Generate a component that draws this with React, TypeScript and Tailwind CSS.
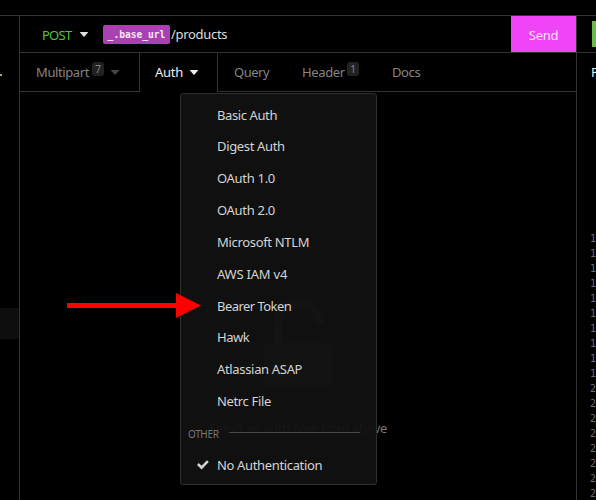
import React from 'react';

const authTypes = [
  { label: 'Basic Auth', height: 'h-[31px]', tracking: 'tracking-[-0.4px]' },
  { label: 'Digest Auth', height: 'h-8', tracking: 'tracking-[-0.34px]' },
  { label: 'OAuth 1.0', height: 'h-8', tracking: 'tracking-[-0.3px]' },
  { label: 'OAuth 2.0', height: 'h-8', tracking: 'tracking-[-0.3px]' },
  { label: 'Microsoft NTLM', height: 'h-8', tracking: 'tracking-[-0.32px]' },
  { label: 'AWS IAM v4', height: 'h-8', tracking: 'tracking-[-0.22px]' },
  { label: 'Bearer Token', height: 'h-[31px]', tracking: 'tracking-[-0.55px]' },
  { label: 'Hawk', height: 'h-8', tracking: 'tracking-[-0.45px]' },
  { label: 'Atlassian ASAP', height: 'h-8', tracking: 'tracking-[-0.33px]' },
  { label: 'Netrc File', height: 'h-8', tracking: 'tracking-[-0.35px]' },
];

const lineNumbers = [10, 11, 12, 13, 14, 15, 16, 17, 18, 19, 20, 21, 22, 23, 24, 25, 26, 27];

function Caret({ className }: { className: string }) {
  return (
    <svg viewBox="0 0 8 5" className={`h-[5px] w-2 shrink-0 ${className}`} fill="currentColor">
      <path d="M.4 0h7.2c.4 0 .5.4.2.7L4.5 4.6c-.3.4-.7.4-1 0L.2.7C-.1.4 0 0 .4 0Z" />
    </svg>
  );
}

function Badge({ children }: { children: React.ReactNode }) {
  return (
    <span className="mb-[6px] flex h-[14px] w-3 shrink-0 items-center justify-center rounded-[3px] bg-[#222] text-[10px] leading-none text-[#858585]">
      {children}
    </span>
  );
}

function AuthMenu() {
  return (
    <div className="absolute top-[93px] left-[180px] flex h-[392px] w-[197px] flex-col rounded-[3px] border border-[#2e2e2e] bg-[#111111]/95 pt-[5px] text-[#d4d4d4]">
      <ul>
        {authTypes.map((item) => (
          <li key={item.label} className={`flex items-start pt-[7px] pl-9 whitespace-nowrap ${item.height}`}>
            <span className={item.tracking}>{item.label}</span>
          </li>
        ))}
      </ul>
      <div className="flex h-[31px] items-center pr-4 pl-[7px]">
        <span className="w-[41px] pt-[2px] text-[10px] tracking-[-0.35px] text-[#777]">OTHER</span>
        <span className="h-px grow bg-[#484848]" />
      </div>
      <div className="flex h-[34px] items-center pl-4">
        <svg viewBox="0 0 12 10" className="mb-px h-[10px] w-3" fill="currentColor">
          <path d="M10 .3 11.8 2.1 4.6 9.4 0 5 1.8 3.1 4.6 5.8Z" />
        </svg>
        <span className="ml-2 tracking-[-0.35px] whitespace-nowrap">No Authentication</span>
      </div>
    </div>
  );
}

export default function App() {
  return (
    <div className="relative flex h-[500px] w-[596px] flex-col overflow-hidden bg-black font-['Noto_Sans',sans-serif] text-[13px] leading-[18px] text-[#858585]">
      <div className="h-4 shrink-0 border-b border-[#333]" />
      <div className="flex min-h-0 grow">
        <aside className="flex w-[19px] shrink-0 flex-col">
          <div className="mt-[58px] h-[2px] w-[2px] bg-[#b99d83]" />
          <div className="mt-[232px] h-[31px] bg-[#0e0e0e]" />
        </aside>
        <main className="flex w-[558px] shrink-0 flex-col border-x border-[#333]">
          <div className="flex h-[37px] shrink-0 items-center border-b border-[#333]">
            <span className="ml-[22px] w-[31px] pt-[2px] tracking-[-0.75px] text-[#59c233]">POST</span>
            <Caret className="ml-[7px] text-[#dedede]" />
            <div className="ml-[15px] flex h-[19px] w-[67px] items-center justify-center rounded-[2px] bg-[#ab40b3] pt-px font-['DejaVu_Sans_Mono',monospace] text-[9.6px] font-bold text-[#f7e8f8]">
              _.base_url
            </div>
            <span className="ml-px tracking-[-0.3px] text-[#dedede]">/products</span>
            <button className="ml-auto h-9 w-[65px] bg-[#ef45f7] pt-px tracking-[-0.3px] text-[#fbe4fc]">Send</button>
          </div>
          <nav className="flex h-[39px] shrink-0 text-[#858585]">
            <div className="flex w-[119px] items-center border-b border-[#333] pl-4">
              <span className="w-[56px] tracking-[-0.4px]">Multipart</span>
              <Badge>7</Badge>
              <Caret className="ml-[7px] text-[#454545]" />
            </div>
            <div className="flex w-[79px] items-center border-x border-[#333] pb-px pl-[15px] text-[#eee]">
              <span className="w-[35px] tracking-[-0.3px]">Auth</span>
              <Caret className="text-[#eee]" />
            </div>
            <div className="flex grow items-center border-b border-[#333] pl-4">
              <span className="w-[68px] tracking-[-0.5px]">Query</span>
              <span className="w-[45px] tracking-[-0.35px]">Header</span>
              <Badge>1</Badge>
              <span className="ml-[33px] tracking-[-0.4px]">Docs</span>
            </div>
          </nav>
          <section className="flex grow flex-col items-center pt-[206px]">
            <svg viewBox="0 0 68 89" className="h-[89px] w-[68px] shrink-0" fill="none">
              <path d="M14 47V24C14 0 54 0 55 22" stroke="#383838" strokeWidth="10" strokeLinecap="round" />
              <rect y="45" width="68" height="44" rx="6" fill="#383838" />
            </svg>
            <span className="mt-[32px] tracking-[-0.38px] text-[#777]">Select an auth type from above</span>
          </section>
        </main>
        <aside className="flex grow flex-col overflow-hidden">
          <div className="h-[37px] shrink-0 border-b border-[#333] pt-[5px] pl-[15px]">
            <div className="h-[26px] bg-[#68bb49]" />
          </div>
          <div className="flex h-[39px] shrink-0 items-center pb-px pl-[14px] text-[#eee]">Preview</div>
          <div className="mt-[139px] pl-[13px] font-['DejaVu_Sans_Mono',monospace] text-[10px] leading-[15px] text-[#6c6c6c]">
            {lineNumbers.map((n) => (
              <div key={n} className="h-[15px]">{n}</div>
            ))}
          </div>
        </aside>
      </div>
      <AuthMenu />
      <svg viewBox="0 0 134 25" className="absolute top-[293px] left-[67px] h-[25px] w-[134px]" fill="#ff0000">
        <path d="M0 10h109V0l25 12.5L109 25V15H0Z" />
      </svg>
    </div>
  );
}
